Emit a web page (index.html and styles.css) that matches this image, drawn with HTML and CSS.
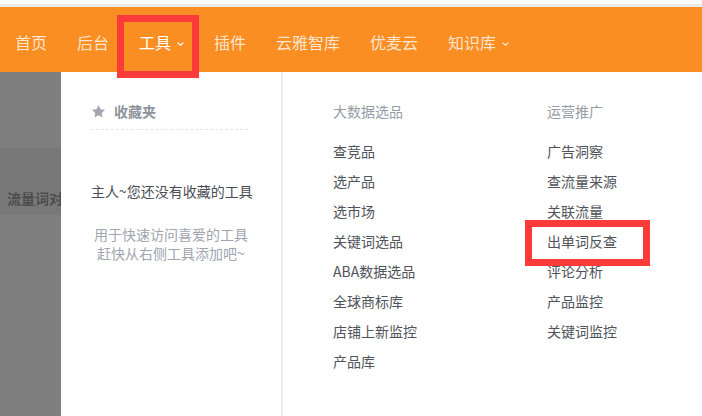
FILE: index.html
```html
<!DOCTYPE html>
<html lang="zh">
<head>
<meta charset="utf-8">
<link rel="stylesheet" href="styles.css">
</head>
<body>
<div class="topstrip"></div>
<nav class="nav">
  <a class="nav-item">首页</a>
  <a class="nav-item">后台</a>
  <a class="nav-item active">工具<svg class="caret" viewBox="0 0 7 4"><polyline points="0.6,0.6 3.5,3.3 6.4,0.6"/></svg></a>
  <a class="nav-item">插件</a>
  <a class="nav-item">云雅智库</a>
  <a class="nav-item">优麦云</a>
  <a class="nav-item">知识库<svg class="caret" viewBox="0 0 7 4"><polyline points="0.6,0.6 3.5,3.3 6.4,0.6"/></svg></a>
</nav>
<div class="main">
  <div class="shade">
    <div class="shade-top"></div>
    <div class="shade-band"><span>流量词对</span></div>
  </div>
  <div class="panel">
    <div class="fav">
      <div class="fav-head">
        <svg class="star" viewBox="0 0 24 24"><path d="M12 1.5l3.2 6.7 7.3 1-5.3 5.1 1.3 7.2L12 18l-6.5 3.5 1.3-7.2-5.3-5.1 7.3-1z"/></svg>
        <span>收藏夹</span>
      </div>
      <div class="fav-empty">主人~您还没有收藏的工具</div>
      <div class="fav-desc">用于快速访问喜爱的工具<br>赶快从右侧工具添加吧~</div>
    </div>
    <div class="tools">
      <div class="col">
        <div class="col-title">大数据选品</div>
        <a class="tool">查竞品</a>
        <a class="tool">选产品</a>
        <a class="tool">选市场</a>
        <a class="tool">关键词选品</a>
        <a class="tool">ABA数据选品</a>
        <a class="tool">全球商标库</a>
        <a class="tool">店铺上新监控</a>
        <a class="tool">产品库</a>
      </div>
      <div class="col">
        <div class="col-title">运营推广</div>
        <a class="tool">广告洞察</a>
        <a class="tool">查流量来源</a>
        <a class="tool">关联流量</a>
        <a class="tool">出单词反查</a>
        <a class="tool">评论分析</a>
        <a class="tool">产品监控</a>
        <a class="tool">关键词监控</a>
      </div>
    </div>
  </div>
</div>
<div class="mark mark-tools"></div>
<div class="mark mark-item"></div>
</body>
</html>
```

FILE: styles.css
```css
html, body {
  margin: 0;
  padding: 0;
}
body {
  width: 702px;
  height: 416px;
  overflow: hidden;
  position: relative;
  background: #fff;
  font-family: "Microsoft YaHei", "Noto Sans CJK SC", "Noto Sans", sans-serif;
}
.topstrip {
  height: 4px;
  background: #fbfbfb;
  border-bottom: 3px solid #ebebeb;
}
.nav {
  height: 65px;
  background: #fa8e22;
  display: flex;
  align-items: center;
  padding-top: 5px;
  box-sizing: border-box;
}
.nav-item {
  display: flex;
  align-items: center;
  padding: 0 15px;
  font-size: 16px;
  line-height: 22px;
  color: rgba(255, 255, 255, 0.78);
}
.nav-item.active {
  color: #fff;
}
.caret {
  width: 7px;
  height: 4px;
  margin-left: 6px;
  margin-top: 3px;
  fill: none;
  stroke: currentColor;
  stroke-width: 1.2;
}
.main {
  display: flex;
  height: 344px;
}
.shade {
  width: 61px;
  flex: none;
  background: #7f7f7f;
  overflow: hidden;
  white-space: nowrap;
}
.shade-top {
  height: 76px;
}
.shade-band {
  height: 67px;
  background: #787878;
  padding: 40px 0 0 7px;
  box-sizing: border-box;
  font-size: 14px;
  line-height: 20px;
  font-weight: bold;
  color: #4e4e4e;
}
.panel {
  flex: 1;
  display: flex;
  background: #fff;
}
.fav {
  width: 222px;
  flex: none;
  box-sizing: border-box;
  border-right: 2px solid #ededed;
  padding: 29px 33px 0 30px;
}
.fav-head {
  display: flex;
  align-items: center;
  gap: 8px;
  padding-bottom: 8px;
  border-bottom: 1px dashed #e6e6e6;
  font-size: 14px;
  line-height: 20px;
  font-weight: bold;
  color: #8d929b;
}
.star {
  width: 15px;
  height: 15px;
  fill: #a3a8b0;
}
.fav-empty {
  margin-top: 51px;
  margin-right: -3px;
  text-align: center;
  font-size: 14px;
  line-height: 20px;
  color: #4a4d55;
  white-space: nowrap;
}
.fav-desc {
  margin-top: 24px;
  margin-right: -3px;
  text-align: center;
  font-size: 14px;
  line-height: 19px;
  color: #a0a5b0;
  white-space: nowrap;
}
.tools {
  display: flex;
  padding: 29px 0 0 50px;
}
.col {
  width: 214px;
  display: flex;
  flex-direction: column;
}
.col-title {
  font-size: 14px;
  line-height: 20px;
  color: #979ca6;
  margin-bottom: 15px;
}
.tool {
  font-size: 14px;
  line-height: 30px;
  color: #50535a;
  white-space: nowrap;
}
.mark {
  position: absolute;
  border: 7px solid #fb3a3a;
  box-sizing: border-box;
}
.mark-tools {
  left: 117px;
  top: 15px;
  width: 82px;
  height: 63px;
}
.mark-item {
  left: 525px;
  top: 220px;
  width: 125px;
  height: 46px;
}
```
